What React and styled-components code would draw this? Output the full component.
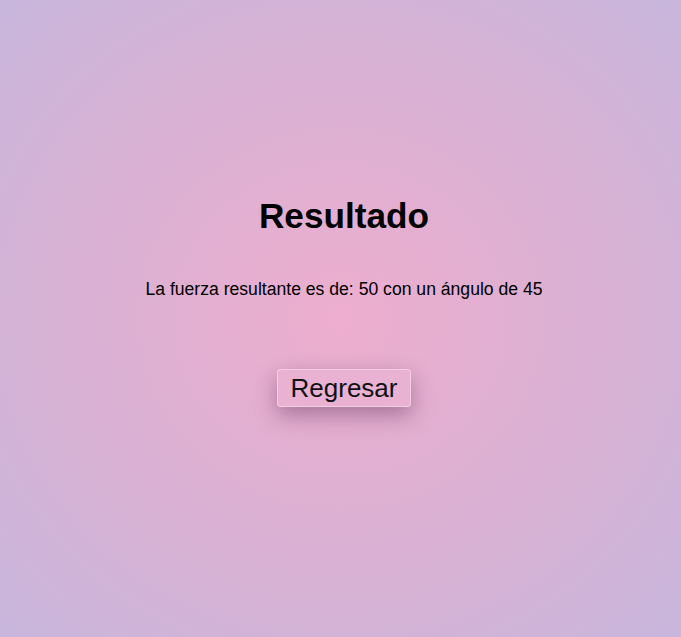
import React from "react";
import styled, { createGlobalStyle } from "styled-components";

const GlobalStyle = createGlobalStyle`
  html, body {
    margin: 0;
    padding: 0;
  }
  body {
    font-family: "Liberation Sans", Arial, sans-serif;
    color: #000;
    min-height: 100vh;
    background: radial-gradient(ellipse at 50% 50%, #eeaecf 0%, #dcb0d2 45%, #c8b6dc 100%);
  }
`;

const Page = styled.main`
  min-height: 100vh;
  box-sizing: border-box;
  display: flex;
  flex-direction: column;
  align-items: center;
  padding: 196px 0 0 7px;
`;

const Title = styled.h1`
  margin: 0;
  font-size: 35.2px;
  font-weight: 700;
`;

const Message = styled.p`
  margin: 43px 0 0;
  font-size: 17.6px;
`;

const BackButton = styled.button`
  margin-top: 69px;
  font-family: "Liberation Sans", Arial, sans-serif;
  font-size: 26px;
  color: #111;
  padding: 3px 13px;
  height: 38px;
  box-sizing: border-box;
  background: rgba(234, 178, 210, 0.9);
  border: 1px solid rgba(248, 212, 232, 0.8);
  border-radius: 4px;
  box-shadow: 0 8px 22px rgba(60, 20, 60, 0.38);
  cursor: pointer;
  line-height: 1;
`;

export default function App() {
  return (
    <>
      <GlobalStyle />
      <Page>
        <Title>Resultado</Title>
        <Message>La fuerza resultante es de: 50 con un ángulo de 45</Message>
        <BackButton>Regresar</BackButton>
      </Page>
    </>
  );
}
